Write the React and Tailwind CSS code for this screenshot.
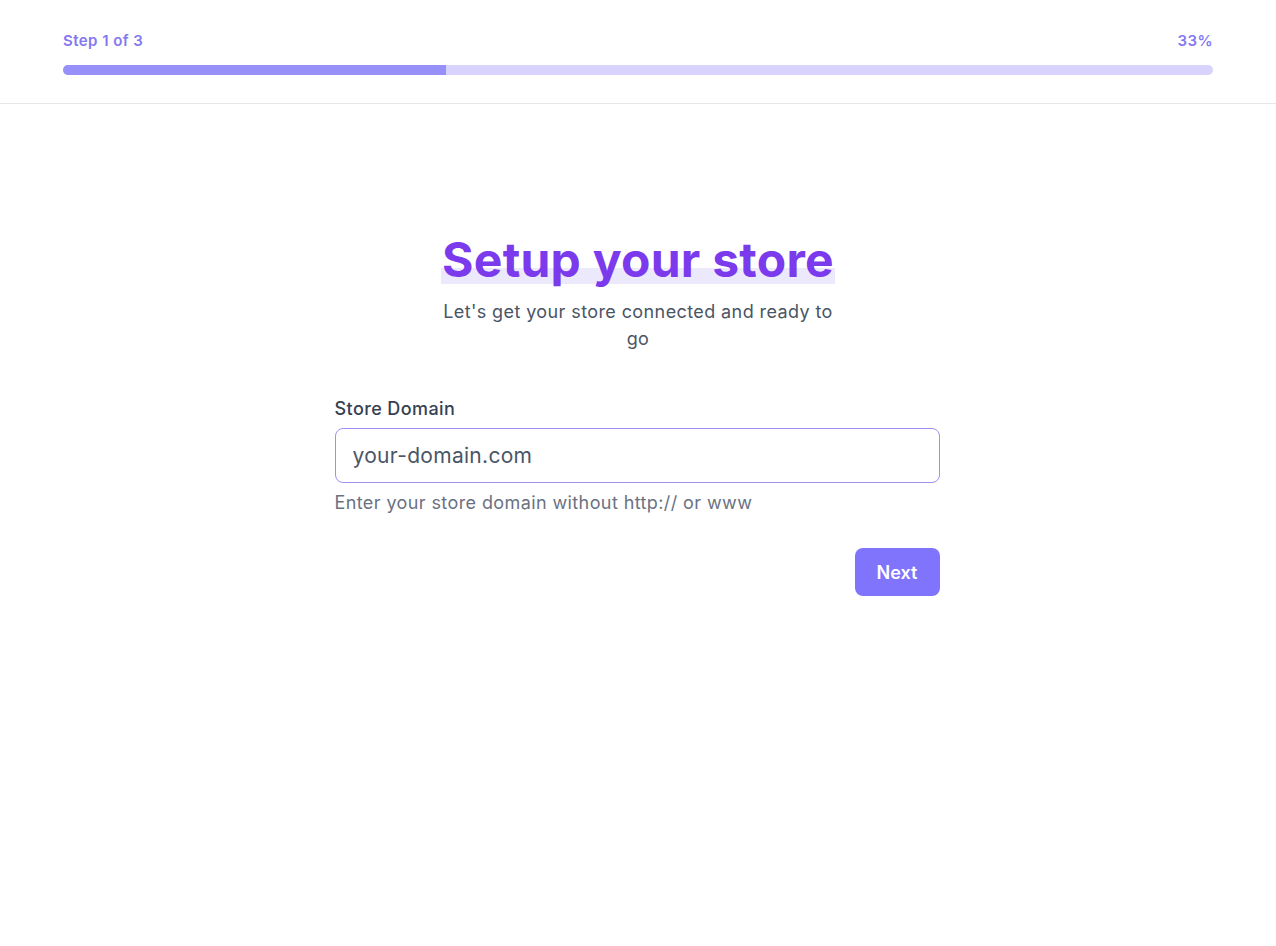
import React from 'react';

function ProgressHeader({ step, total }) {
  const pct = Math.round((step / total) * 100);
  return (
    <header className="border-b border-gray-200 px-[63px] pt-[32px] pb-[28px]">
      <div className="flex items-center justify-between text-[15px] font-semibold leading-[17px] tracking-[0.45px] text-[#8478f0]">
        <span>Step {step} of {total}</span>
        <span>{pct}%</span>
      </div>
      <div className="mt-[16px] h-[10px] w-full overflow-hidden rounded-full bg-[#d7d3fc]">
        <div className="h-full bg-[#9690f8]" style={{ width: `${(step / total) * 100}%` }} />
      </div>
    </header>
  );
}

export default function App() {
  return (
    <div className="min-h-screen bg-white font-['Inter',sans-serif] text-gray-900">
      <ProgressHeader step={1} total={3} />

      <main className="flex flex-col items-center pt-[132px]">
        <div className="flex flex-col items-center text-center">
          <h1 className="inline-block bg-[linear-gradient(transparent_66%,#ece9fd_66%)] px-px text-[48px] font-bold leading-[48px] tracking-[0.25px] text-[#7c3aed]">
            Setup your store
          </h1>
          <p className="mt-[14px] w-[400px] text-[18px] leading-[27px] tracking-[0.4px] text-gray-600">
            Let's get your store connected and ready to go
          </p>
        </div>

        <form className="mt-[43px] w-[605px] -translate-x-px tracking-[0.4px]" onSubmit={(e) => e.preventDefault()}>
          <label htmlFor="domain" className="block text-[18px] font-medium leading-[27px] text-gray-700">
            Store Domain
          </label>
          <input
            id="domain"
            type="text"
            placeholder="your-domain.com"
            className="mt-[6px] block h-[55px] w-full rounded-lg border border-[#9d91f2] px-[17px] text-[21px] tracking-[0.3px] text-gray-700 outline-none placeholder:text-gray-600"
          />
          <p className="mt-[6px] text-[18px] leading-[27px] text-gray-500">
            Enter your store domain without http:// or www
          </p>
          <div className="mt-[32px] flex justify-end">
            <button
              type="submit"
              className="h-[48px] w-[85px] rounded-lg bg-[#8174fc] text-[18px] font-semibold tracking-normal text-white"
            >
              Next
            </button>
          </div>
        </form>
      </main>
    </div>
  );
}
